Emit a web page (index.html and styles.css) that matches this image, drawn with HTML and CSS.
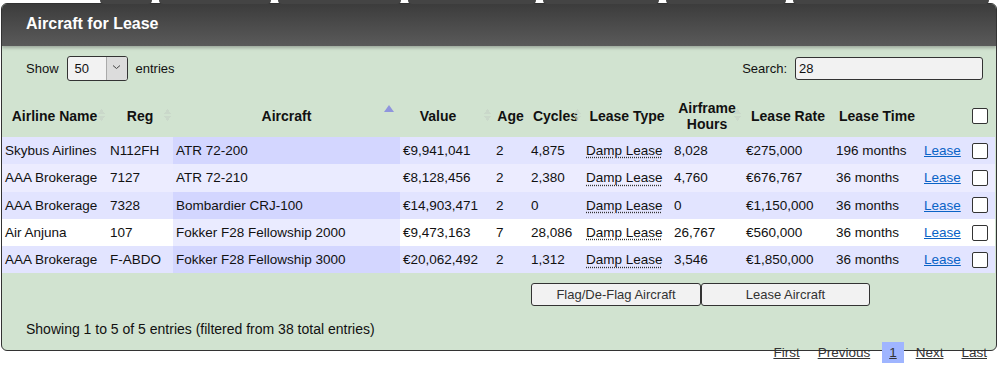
FILE: index.html
```html
<!DOCTYPE HTML>
<html>
<head>
	<title>Aircraft for Lease</title>
	<meta name="viewport" content="width=device-width">
	<link rel="stylesheet" href="styles.css">
</head>
<body>
	<div class="tabs">
		<span class="tab t1"></span>
		<span class="tab t2"></span>
		<span class="tab t3"></span>
		<span class="tab t4"></span>
		<span class="tab t5"></span>
		<span class="tab t6"></span>
		<span class="tab t7"></span>
	</div>
	<div class="panel">
		<div class="header">
			<h1>Aircraft for Lease</h1>
		</div>
		<div class="toolbar">
			<label class="length">Show
				<span class="select"><span class="sval">50</span><span class="sarrow"><svg width="9" height="6" viewBox="0 0 9 6"><path d="M1 1.5 L4.5 4.5 L8 1.5" fill="none" stroke="#444" stroke-width="1"/></svg></span></span>
				entries</label>
			<label class="search">Search: <input class="textbox" type="text" value="28"></label>
		</div>
		<table class="leaselist" cellspacing="0">
			<thead>
				<tr>
					<th class="c1">Airline Name<span class="sort"></span></th>
					<th class="c2">Reg<span class="sort"></span></th>
					<th class="c3">Aircraft<span class="sort asc"></span></th>
					<th class="c4">Value<span class="sort"></span></th>
					<th class="c5">Age</th>
					<th class="c6">Cycles<span class="sort"></span></th>
					<th class="c7">Lease Type</th>
					<th class="c8">Airframe Hours<span class="sort"></span></th>
					<th class="c9">Lease Rate</th>
					<th class="c10">Lease Time</th>
					<th class="c11"></th>
					<th class="c12"><span class="check"></span></th>
				</tr>
			</thead>
			<tbody>
				<tr class="odd">
					<td>Skybus Airlines</td><td>N112FH</td><td class="sorted">ATR 72-200</td><td>€9,941,041</td><td>2</td><td>4,875</td>
					<td><abbr class="ltype">Damp Lease</abbr></td><td>8,028</td><td>€275,000</td><td>196 months</td>
					<td><a href="#" class="lease">Lease</a></td><td><span class="check"></span></td>
				</tr>
				<tr class="even hl">
					<td>AAA Brokerage</td><td>7127</td><td class="sorted">ATR 72-210</td><td>€8,128,456</td><td>2</td><td>2,380</td>
					<td><abbr class="ltype">Damp Lease</abbr></td><td>4,760</td><td>€676,767</td><td>36 months</td>
					<td><a href="#" class="lease">Lease</a></td><td><span class="check"></span></td>
				</tr>
				<tr class="odd">
					<td>AAA Brokerage</td><td>7328</td><td class="sorted">Bombardier CRJ-100</td><td>€14,903,471</td><td>2</td><td>0</td>
					<td><abbr class="ltype">Damp Lease</abbr></td><td>0</td><td>€1,150,000</td><td>36 months</td>
					<td><a href="#" class="lease">Lease</a></td><td><span class="check"></span></td>
				</tr>
				<tr class="even">
					<td>Air Anjuna</td><td>107</td><td class="sorted">Fokker F28 Fellowship 2000</td><td>€9,473,163</td><td>7</td><td>28,086</td>
					<td><abbr class="ltype">Damp Lease</abbr></td><td>26,767</td><td>€560,000</td><td>36 months</td>
					<td><a href="#" class="lease">Lease</a></td><td><span class="check"></span></td>
				</tr>
				<tr class="odd">
					<td>AAA Brokerage</td><td>F-ABDO</td><td class="sorted">Fokker F28 Fellowship 3000</td><td>€20,062,492</td><td>2</td><td>1,312</td>
					<td><abbr class="ltype">Damp Lease</abbr></td><td>3,546</td><td>€1,850,000</td><td>36 months</td>
					<td><a href="#" class="lease">Lease</a></td><td><span class="check"></span></td>
				</tr>
			</tbody>
		</table>
		<div class="actions">
			<button class="button bflag">Flag/De-Flag Aircraft</button><button class="button blease">Lease Aircraft</button>
		</div>
		<div class="info">Showing 1 to 5 of 5 entries (filtered from 38 total entries)</div>
	</div>
	<div class="paging">
		<a href="#" class="first">First</a>
		<a href="#" class="prev">Previous</a>
		<a href="#" class="current">1</a>
		<a href="#" class="next">Next</a>
		<a href="#">Last</a>
	</div>
</body>
</html>
```

FILE: styles.css
```css
/* font choice */
* {
	font-family: "Liberation Sans", Arial, sans-serif;
	box-sizing: border-box;
}
body {
	margin: 0;
	background-color: white;
	color: #111;
	font-size: 13px;
}
/* tab strip cut off at top */
.tabs {
	display: flex;
	height: 4px;
	padding-left: 100px;
	gap: 7px;
}
.tab {
	height: 4px;
	background-color: #444;
	border-radius: 0 0 4px 4px;
}
.t1 { width: 52px; }
.t2 { width: 112px; }
.t3 { width: 123px; }
.t4 { width: 128px; }
.t5 { width: 116px; }
.t6 { width: 120px; }
.t7 { width: 196px; }

/* main panel */
.panel {
	margin: -1px 3px 0 1px;
	border: 1px solid #333;
	border-radius: 6px;
	background-color: #d1e3d0;
	overflow: hidden;
}
.header {
	height: 42px;
	background: linear-gradient(#3c3c3c, #5a5a5a);
	box-shadow: 0 2px 3px rgba(60, 60, 60, 0.35);
	padding: 11px 24px;
	position: relative;
}
.header h1 {
	margin: 0;
	font-size: 16px;
	font-weight: bold;
	color: white;
}
.toolbar {
	display: flex;
	justify-content: space-between;
	align-items: center;
	padding: 10px 13px 0 24px;
	height: 35px;
}
.length, .search {
	display: flex;
	align-items: center;
	gap: 8px;
	font-size: 13px;
}
.select {
	display: flex;
	width: 61px;
	height: 25px;
	border: 1px solid #333;
	border-radius: 3px;
	background-color: #f2f2f2;
	overflow: hidden;
}
.sval {
	flex: 1;
	padding: 4px 7px;
}
.sarrow {
	width: 21px;
	background-color: #dcdcdc;
	border-left: 1px solid #aaa;
	display: flex;
	justify-content: center;
	padding-top: 7px;
}
.textbox {
	width: 188px;
	height: 23px;
	border: 1px solid #333;
	border-radius: 3px;
	background-color: #f2f2f2;
	padding: 1px 3px;
	font-size: 13px;
	color: #111;
}

/* table */
.leaselist {
	width: 993px;
	margin-top: 14px;
	table-layout: fixed;
	border-collapse: collapse;
}
.leaselist th {
	height: 42px;
	padding: 0 3px;
	font-weight: bold;
	font-size: 14px;
	text-align: center;
	position: relative;
	line-height: 16px;
}
.leaselist td {
	height: 27.3px;
	padding: 0 3px;
	font-size: 13.5px;
	white-space: nowrap;
	overflow: hidden;
}
.leaselist th.c4 { padding-right: 20px; }
.c1 { width: 105px; }
.c2 { width: 66px; }
.c3 { width: 227px; }
.c4 { width: 93px; }
.c5 { width: 35px; }
.c6 { width: 55px; }
.c7 { width: 88px; }
.c8 { width: 72px; }
.c9 { width: 90px; }
.c10 { width: 88px; }
.c11 { width: 45px; }
.c12 { width: 29px; }
.odd td { background-color: #e2e4ff; }
.even td { background-color: white; }
.even.hl td { background-color: #ececff; }
.odd td.sorted { background-color: #d3d6ff; }
.even td.sorted { background-color: #eaebff; }

/* sort arrows */
.sort {
	position: absolute;
	right: 2px;
	top: 13px;
	width: 7px;
	height: 14px;
	background:
		linear-gradient(to bottom right, transparent 50%, #c8d4c8 50%) left top / 4px 6px no-repeat,
		linear-gradient(to bottom left, transparent 50%, #c8d4c8 50%) right top / 4px 6px no-repeat,
		linear-gradient(to top right, transparent 50%, #c8d4c8 50%) left bottom / 4px 6px no-repeat,
		linear-gradient(to top left, transparent 50%, #c8d4c8 50%) right bottom / 4px 6px no-repeat;
	opacity: 0.7;
}
.sort.asc {
	top: 10px;
	right: 6px;
	width: 10px;
	height: 7px;
	background: none;
	opacity: 1;
	border-left: 5px solid transparent;
	border-right: 5px solid transparent;
	border-bottom: 7px solid #8f95dd;
}
.check {
	display: block;
	width: 16px;
	height: 16px;
	margin-left: 3px;
	border: 1px solid #333;
	border-radius: 2px;
	background-color: white;
}
.ltype {
	text-decoration: underline dotted #333;
	text-underline-offset: 2px;
}
.lease {
	color: #0a63c6;
}

/* buttons */
.actions {
	padding: 10px 0 0 529px;
	display: flex;
}
.button {
	height: 23px;
	border: 1px solid #333;
	border-radius: 3px;
	background-color: #f2f2f2;
	font-size: 13px;
	color: #333;
	padding: 0;
}
.bflag { width: 170px; }
.blease { width: 169px; }
.info {
	padding: 15px 24px 11px;
	height: 44px;
	font-size: 14px;
}

/* pagination */
.paging {
	display: flex;
	justify-content: flex-end;
	align-items: center;
	margin-top: -9px;
	padding-right: 13px;
	font-size: 13.5px;
	position: relative;
}
.paging a {
	color: #333;
	margin-left: 18px;
}
.paging .first { margin-left: 0; }
.paging .current,
.paging .next { margin-left: 12px; }
.paging a.current {
	background-color: #9fb5ff;
	padding: 3px 7px;
}
```
